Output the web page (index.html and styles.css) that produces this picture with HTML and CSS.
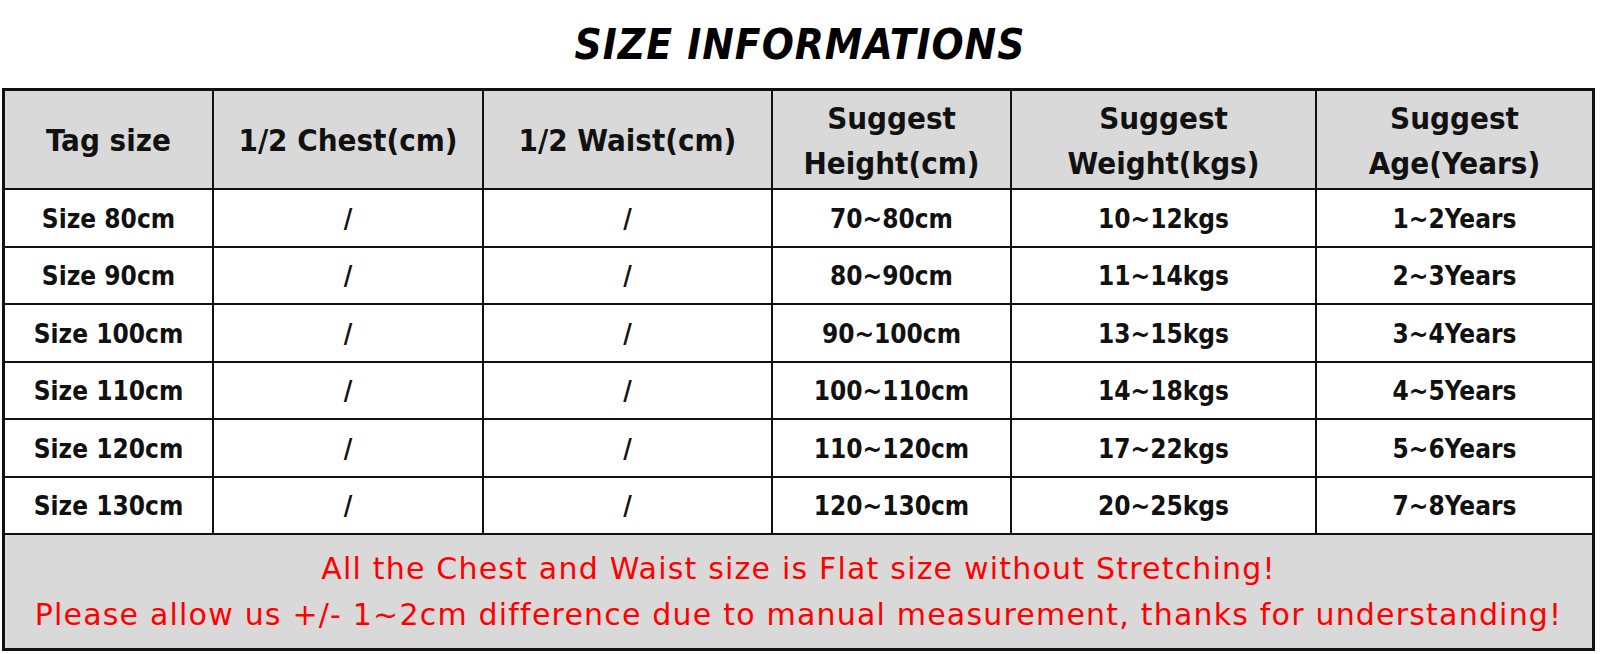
FILE: index.html
```html
<!DOCTYPE html>
<html>
<head>
<meta charset="utf-8">
<link rel="stylesheet" href="styles.css">
</head>
<body>
<div class="page">
  <h1 class="title">SIZE INFORMATIONS</h1>
  <div class="sheet">
    <div class="cell head">Tag size</div>
    <div class="cell head">1/2 Chest(cm)</div>
    <div class="cell head">1/2 Waist(cm)</div>
    <div class="cell head">Suggest<br>Height(cm)</div>
    <div class="cell head">Suggest<br>Weight(kgs)</div>
    <div class="cell head">Suggest<br>Age(Years)</div>

    <div class="cell">Size 80cm</div><div class="cell">/</div><div class="cell">/</div><div class="cell">70~80cm</div><div class="cell">10~12kgs</div><div class="cell">1~2Years</div>
    <div class="cell">Size 90cm</div><div class="cell">/</div><div class="cell">/</div><div class="cell">80~90cm</div><div class="cell">11~14kgs</div><div class="cell">2~3Years</div>
    <div class="cell">Size 100cm</div><div class="cell">/</div><div class="cell">/</div><div class="cell">90~100cm</div><div class="cell">13~15kgs</div><div class="cell">3~4Years</div>
    <div class="cell">Size 110cm</div><div class="cell">/</div><div class="cell">/</div><div class="cell">100~110cm</div><div class="cell">14~18kgs</div><div class="cell">4~5Years</div>
    <div class="cell">Size 120cm</div><div class="cell">/</div><div class="cell">/</div><div class="cell">110~120cm</div><div class="cell">17~22kgs</div><div class="cell">5~6Years</div>
    <div class="cell">Size 130cm</div><div class="cell">/</div><div class="cell">/</div><div class="cell">120~130cm</div><div class="cell">20~25kgs</div><div class="cell">7~8Years</div>

    <div class="cell note">All the Chest and Waist size is Flat size without Stretching!<br>Please allow us +/- 1~2cm difference due to manual measurement, thanks for understanding!</div>
  </div>
</div>
</body>
</html>
```

FILE: styles.css
```css
html, body {
  margin: 0;
  padding: 0;
  background: #ffffff;
}

.page {
  width: 1600px;
  height: 654px;
  overflow: hidden;
  font-family: "DejaVu Sans Condensed", "DejaVu Sans", sans-serif;
  font-stretch: condensed;
  color: #111111;
}

.title {
  margin: 0;
  height: 88px;
  display: flex;
  align-items: center;
  justify-content: center;
  font-size: 42px;
  font-weight: bold;
  font-style: italic;
  letter-spacing: 1px;
  color: #000000;
}

.sheet {
  margin-left: 2px;
  width: 1593px;
  box-sizing: border-box;
  display: grid;
  grid-template-columns: 207px 268px 287px 237px 303px 275px;
  grid-template-rows: 97px repeat(6, 55.5px) 113px;
  gap: 2px;
  padding: 3px;
  background: #111111;
}

.cell {
  background: #ffffff;
  display: flex;
  align-items: center;
  justify-content: center;
  text-align: center;
  font-size: 26px;
  font-weight: bold;
  padding-top: 2px;
  box-sizing: border-box;
}

.head {
  background: #d9d9d9;
  font-size: 31px;
  line-height: 45px;
}

.note {
  grid-column: 1 / -1;
  background: #d9d9d9;
  color: #ff0000;
  font-family: "DejaVu Sans", sans-serif;
  font-stretch: normal;
  font-weight: normal;
  font-size: 30px;
  letter-spacing: 1.2px;
  line-height: 46px;
  padding-top: 0;
}
```
